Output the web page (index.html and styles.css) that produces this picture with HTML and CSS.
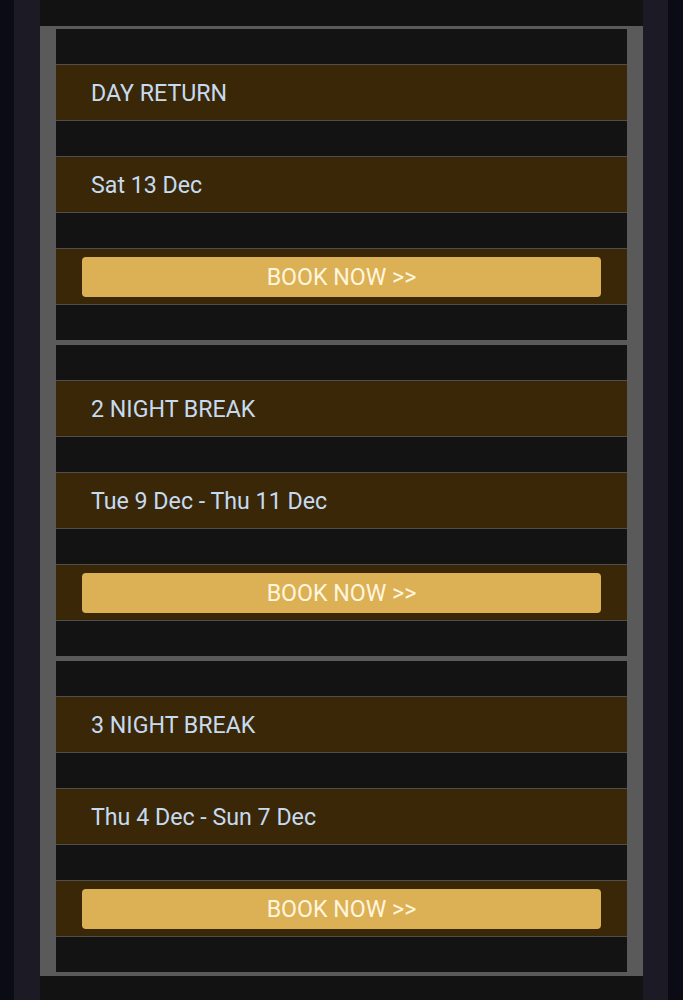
FILE: index.html
```html
<!DOCTYPE html>
<html>
<head>
<meta charset="utf-8">
<link rel="stylesheet" href="styles.css">
</head>
<body>
<div class="frame">
  <div class="column">
    <div class="panel">
      <div class="card">
        <div class="row dark"></div>
        <div class="row brown"><span class="label">DAY RETURN</span></div>
        <div class="row dark"></div>
        <div class="row brown"><span class="label">Sat 13 Dec</span></div>
        <div class="row dark"></div>
        <div class="row brown btnrow"><a class="btn">BOOK NOW &gt;&gt;</a></div>
        <div class="row dark"></div>
      </div>
      <div class="card">
        <div class="row dark"></div>
        <div class="row brown"><span class="label">2 NIGHT BREAK</span></div>
        <div class="row dark"></div>
        <div class="row brown"><span class="label">Tue 9 Dec - Thu 11 Dec</span></div>
        <div class="row dark"></div>
        <div class="row brown btnrow"><a class="btn">BOOK NOW &gt;&gt;</a></div>
        <div class="row dark"></div>
      </div>
      <div class="card">
        <div class="row dark"></div>
        <div class="row brown"><span class="label">3 NIGHT BREAK</span></div>
        <div class="row dark"></div>
        <div class="row brown"><span class="label">Thu 4 Dec - Sun 7 Dec</span></div>
        <div class="row dark"></div>
        <div class="row brown btnrow"><a class="btn">BOOK NOW &gt;&gt;</a></div>
        <div class="row dark"></div>
      </div>
    </div>
  </div>
</div>
</body>
</html>
```
FILE: styles.css
```css
html, body {
  margin: 0;
  padding: 0;
  background: #0b0b16;
  font-family: Roboto, "Liberation Sans", sans-serif;
}
.frame {
  margin: 0 15px 0 14px;
  padding: 0 25px 0 26px;
  background: #1c1b25;
  min-height: 1000px;
  box-sizing: border-box;
}
.column {
  background: #121212;
  padding-top: 26px;
  min-height: 1000px;
  box-sizing: border-box;
}
.panel {
  background: #5a5a5a;
  padding: 3px 16px 4px 16px;
  display: flex;
  flex-direction: column;
  gap: 5px;
}
.card {
  display: flex;
  flex-direction: column;
  gap: 1px;
  background: #4e4e4a;
}
.row {
  display: flex;
  align-items: center;
}
.dark {
  height: 35px;
  background: #131313;
}
.brown {
  height: 55px;
  background: #3a2708;
}
.label {
  padding-left: 35px;
  font-size: 23.2px;
  color: #c6dbef;
}
.btnrow {
  padding: 0 26px;
}
.btn {
  flex: 1;
  height: 40px;
  display: flex;
  align-items: center;
  justify-content: center;
  background: #dcb054;
  border-radius: 4px;
  color: #fff6de;
  font-size: 23.2px;
}
```
